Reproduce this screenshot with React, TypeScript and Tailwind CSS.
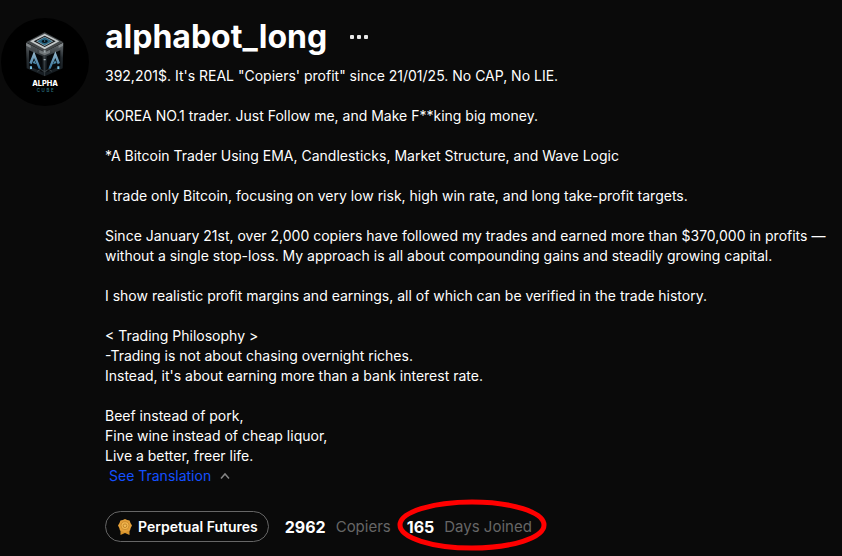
const bio = `392,201$. It's REAL "Copiers' profit" since 21/01/25. No CAP, No LIE.

KOREA NO.1 trader. Just Follow me, and Make F**king big money.

*A Bitcoin Trader Using EMA, Candlesticks, Market Structure, and Wave Logic

I trade only Bitcoin, focusing on very low risk, high win rate, and long take-profit targets.

Since January 21st, over 2,000 copiers have followed my trades and earned more than $370,000 in profits — without a single stop-loss. My approach is all about compounding gains and steadily growing capital.

I show realistic profit margins and earnings, all of which can be verified in the trade history.

< Trading Philosophy >
-Trading is not about chasing overnight riches.
Instead, it's about earning more than a bank interest rate.

Beef instead of pork,
Fine wine instead of cheap liquor,
Live a better, freer life.`

const CubeAvatar = () => (
  <svg viewBox="3 23 264 264" className="size-[88px] shrink-0" role="img" aria-label="Alpha Cube">
    <defs>
      <linearGradient id="left" x1="0" y1="0" x2="0" y2="1">
        <stop offset="0" stopColor="#5a5f62" />
        <stop offset="0.5" stopColor="#272d31" />
        <stop offset="1" stopColor="#141b21" />
      </linearGradient>
      <linearGradient id="right" x1="0" y1="0" x2="0" y2="1">
        <stop offset="0" stopColor="#6b7073" />
        <stop offset="0.45" stopColor="#22292e" />
        <stop offset="1" stopColor="#11181d" />
      </linearGradient>
      <linearGradient id="glow" x1="0" y1="0" x2="0" y2="1">
        <stop offset="0" stopColor="#9dbdd0" />
        <stop offset="1" stopColor="#34719a" />
      </linearGradient>
    </defs>
    <circle cx="135" cy="155" r="132" fill="#000" />
    <path d="M78 97 134 124V198L80 174Z" fill="url(#left)" />
    <path d="M190 97 134 124V198L188 174Z" fill="url(#right)" />
    <path d="M134 66 190 96 134 125 78 96Z" fill="#45494b" />
    <path d="M134 70 178 93 134 117 90 93Z" fill="#c3c8c9" />
    <path d="M134 76 167 93 134 110 101 93Z" fill="#15191c" />
    <path d="M134 79 160 93 134 107 108 93Z" fill="#9ba9ae" />
    <path d="M134 81 156 93 134 105 112 93Z" fill="#286581" />
    <ellipse cx="134" cy="93" rx="9" ry="5" fill="#061017" />
    <circle cx="134" cy="92" r="2" fill="#4b98bd" />
    <path d="M79 98 92 105V113L79 106ZM189 98 176 105V113L189 106Z" fill="#83898c" />
    <path d="M118 119 134 126 150 119V128L134 135 118 128Z" fill="#71777a" />
    {/* dark recessed panels behind the glowing marks */}
    <path d="M87 120 128 138V186L87 167ZM181 120 140 138V186L181 167Z" fill="#06090c" />
    <path d="M134 135V197M109 114v11M159 114v11M112 183l10-6 12 7 12-7 10 6" fill="none" stroke="#4c5459" strokeWidth="2" />
    <path d="M102 123 123 175H116L102 143 95 162 88 158Z" fill="url(#glow)" />
    <path d="M166 123 145 175H152L166 143 173 162 180 158Z" fill="url(#glow)" />
    <path d="M103 150 109 162 98 158ZM165 150 159 162 170 158Z" fill="#4d8cad" />
    <path d="M90 168h6v8h-6zM172 168h6v8h-6z" fill="#77bddd" />
    <path d="M131 120h6v7h-6zM131 146h6v4h-6z" fill="#9da7ab" />
    <text x="135" y="227" textAnchor="middle" fill="#fff" fontSize="22" fontWeight="800">ALPHA</text>
    <text x="138" y="245" textAnchor="middle" fill="#2f7987" fontSize="13" fontWeight="500" letterSpacing="5">CUBE</text>
  </svg>
)

const Medal = () => (
  <svg viewBox="0 0 14 16" className="h-4 w-3.5" aria-hidden="true">
    <path d="M2.500 9.500V16L7 14l4.500 2V9.500Z" fill="#d8942b" />
    <path d="M7 0 9.200 1 11.600 1.600 12.500 4 14 6.500 12.700 9 12 11.500 9.400 12.200 7 13.500 4.600 12.200 2 11.500 1.300 9 0 6.500 1.500 4 2.400 1.600 4.800 1Z" fill="#e5a13a" />
    <circle cx="7" cy="6.700" r="4" fill="#f0b44c" stroke="#bd7f26" strokeWidth="0.700" />
    <circle cx="7" cy="6.700" r="1.800" fill="#f3bd5b" stroke="#b67820" strokeWidth="0.800" />
  </svg>
)

const Stat = ({ value, label }: { value: string; label: string }) => (
  <div className="flex items-center gap-2.5 leading-6 whitespace-nowrap">
    <span className="text-base font-bold text-white">{value}</span>
    <span className="text-[15px] leading-6 text-[#666]">{label}</span>
  </div>
)

const App = () => {
  return (
    <main className="flex min-h-screen items-start gap-4 bg-[#0a0a0a] pt-[18px] pr-4 pl-px font-['Inter',sans-serif] text-white">
      <CubeAvatar />
      <section className="min-w-0 flex-1">
        <div className="flex h-[38px] items-center gap-5">
          <h1 className="text-[32px] leading-10 font-bold">alphabot_long</h1>
          <button type="button" aria-label="More options" className="flex size-6 items-center justify-center">
            <svg viewBox="0 0 24 24" className="size-6" fill="#e8e8e8" aria-hidden="true">
              <rect x="3" y="10" width="4" height="4" rx="1" />
              <rect x="10" y="10" width="4" height="4" rx="1" />
              <rect x="17" y="10" width="4" height="4" rx="1" />
            </svg>
          </button>
        </div>

        <p className="mt-2.5 text-sm leading-5 whitespace-pre-line">{bio}</p>

        <button type="button" className="ml-1 flex h-5 items-center gap-2 text-sm text-[#1450ff]">
          See Translation
          <svg viewBox="0 0 12 12" className="size-3" fill="none" stroke="#858585" strokeWidth="1.500" aria-hidden="true">
            <path d="M2 8.500 6 4l4 4.500" />
          </svg>
        </button>

        <div className="mt-[25px] flex items-center gap-4">
          <button
            type="button"
            className="flex h-[31px] items-center gap-1.5 rounded-full border border-[#666] pr-2.5 pl-3 text-sm font-semibold whitespace-nowrap"
          >
            <Medal />
            Perpetual Futures
          </button>
          <Stat value="2962" label="Copiers" />
          <div className="relative">
            <Stat value="165" label="Days Joined" />
            <svg
              viewBox="0 0 150 52"
              className="pointer-events-none absolute -top-4 -left-2.5 h-[52px] w-[150px]"
              aria-hidden="true"
            >
              <ellipse cx="75" cy="26" rx="72" ry="23" fill="none" stroke="#f00" strokeWidth="5" />
            </svg>
          </div>
        </div>
      </section>
    </main>
  )
}

export default App
